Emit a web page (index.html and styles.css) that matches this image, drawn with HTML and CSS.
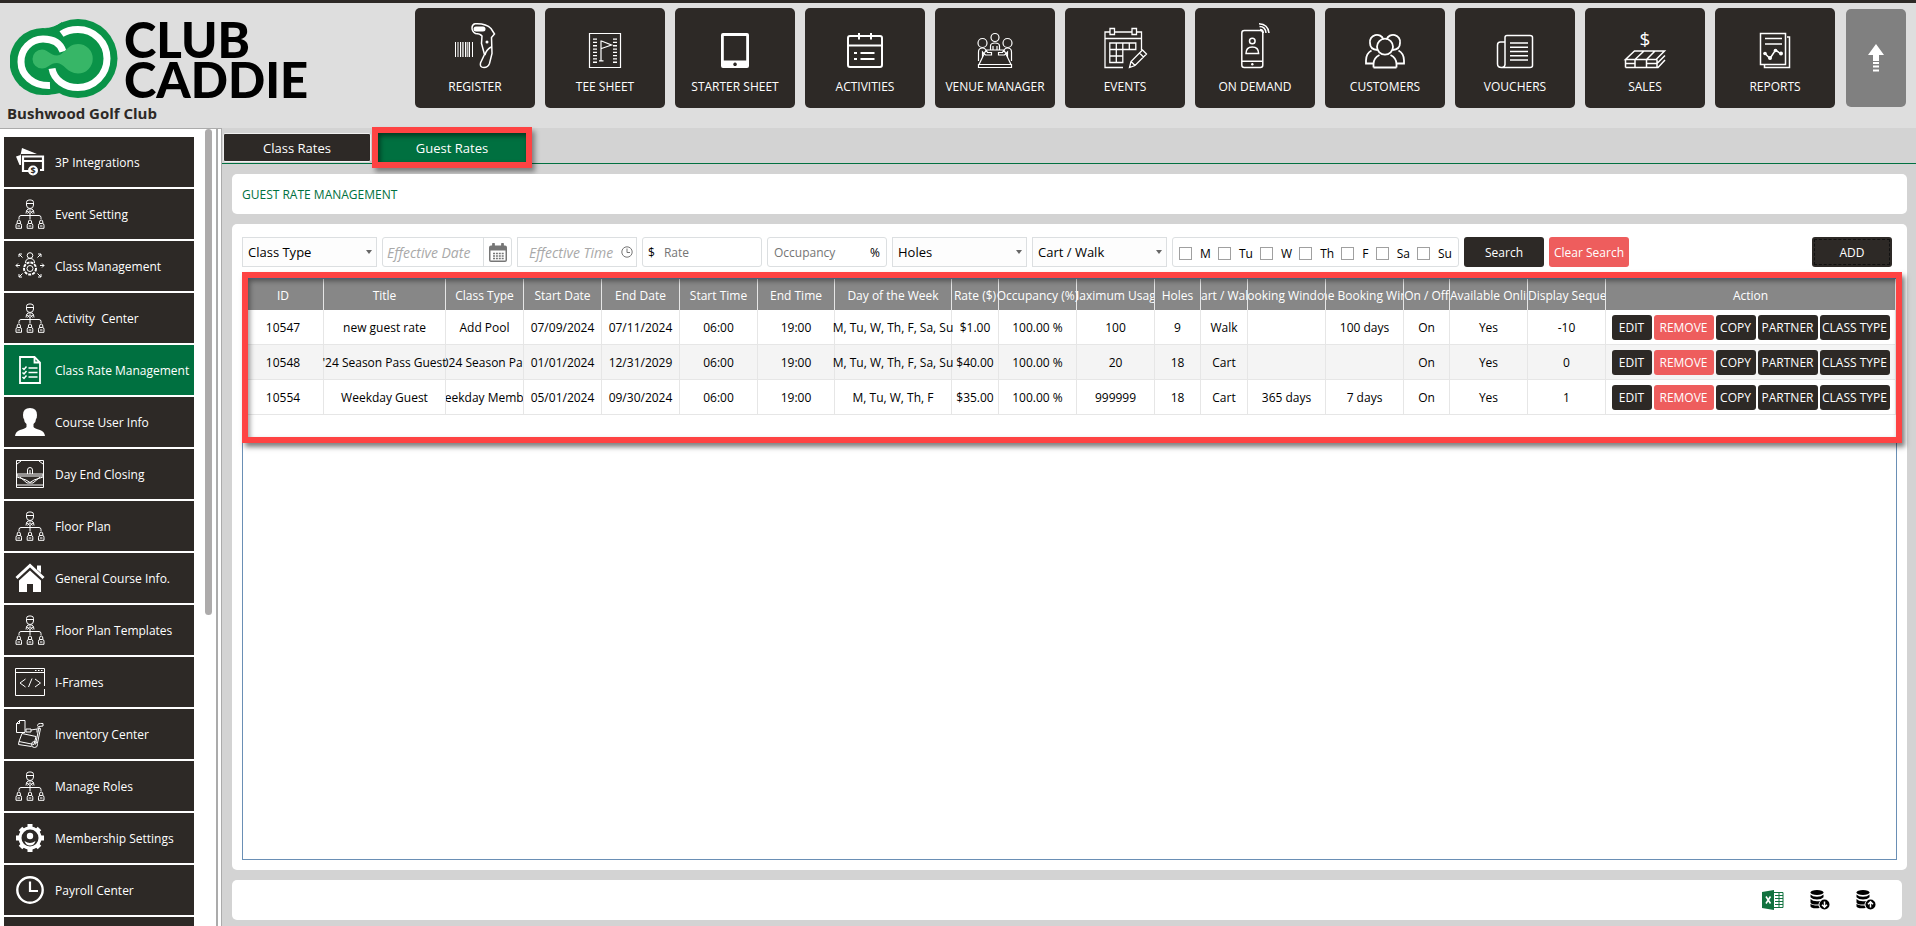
FILE: index.html
```html
<!DOCTYPE html>
<html lang="en">
  <head>
    <meta charset="UTF-8" />
    <title>Club Caddie - Guest Rates</title>
    <link rel="stylesheet" href="styles.css">
  </head>

  <body>
    <!-- shared icons -->
    <svg class="sprite" aria-hidden="true">
      <symbol id="i-org" viewBox="0 0 30 30">
        <path d="M11.500 6V3.500q0-2.500 2.500-2.500h2q2.500 0 2.500 2.500V6M11.500 4.500h7M11.500 6q0 3.500 3.500 3.500T18.500 6M11 14.500q0-3 2-4.500h4q2 1.500 2 4.500M11.500 11.500l3.500 3 3.500-3M12.500 14.500l2.500-3 2.500 3M15 14.500v5.500M4 20v-1.500q0-2 2-2h18q2 0 2 2V20" />
        <path d="M2.200 24.500v-1.500q0-2 1.600-2t1.600 2v1.500M13.400 24.500v-1.500q0-2 1.600-2t1.600 2v1.500M24.600 24.500v-1.500q0-2 1.600-2t1.600 2v1.500" />
        <path d="M1 29.300v-3q0-1.800 1.500-1.800H5q1.500 0 1.500 1.800v3zM12.200 29.300v-3q0-1.800 1.500-1.800h2.600q1.500 0 1.500 1.800v3zM23.500 29.300v-3q0-1.800 1.500-1.800h2.500q1.500 0 1.500 1.800v3zM2.500 27h2.500M13.700 27h2.600M25 27h2.500" />
      </symbol>
      <symbol id="i-db" viewBox="0 0 20 20">
        <ellipse cx="7" cy="2.500" rx="6.500" ry="2.500" />
        <path d="M.5 4.500q2 2.200 6.500 2.200t6.500-2.200v2.800q-2 2.200-6.500 2.200T.5 7.300zM.5 9q2 2.200 6.500 2.200 1.800 0 3-.3-1.500 1.500-1.500 3.500-7 .6-8-1.900zM.5 13.800q2 2 8 1.800.3 1.400 1.200 2.400Q1.500 19 .5 16.500z" />
        <circle cx="14.500" cy="14.500" r="5" />
      </symbol>
    </svg>

    <header class="header">
      <div class="brand">
        <a href="#" class="logo">
          <svg class="logo-mark" viewBox="10 19 108 80" aria-hidden="true">
            <circle cx="43" cy="61.500" r="33.500" fill="#0a9348" />
            <circle cx="78" cy="58.500" r="39.500" fill="#0a9348" />
            <path d="M44 28q10 0 18-6v12zM44 95q6 0 16-2l-4-10z" fill="#0a9348" />
            <path d="M63 51.500C60 42 52 39 43 39a22.500 22.500 0 0 0-22 23c0 13 12 24 29 23.500" fill="none" stroke="#fff" stroke-width="7" />
            <path d="M61.500 34c5-3.500 11-4.500 16.500-4.500a29 29 0 1 1 0 58c-13 0-24-7.500-26-19" fill="none" stroke="#fff" stroke-width="7" />
            <path d="M42 49.500c6 0 8 6 15 6S67 44 78 44a14.500 14.500 0 0 1 0 29.500c-11 0-14-10.500-21-10.500s-9 5.500-15 5.500a9.500 9.500 0 0 1 0-19z" fill="#37b667" />
          </svg>
          <span class="logo-text">CLUB<br>CADDIE</span>
        </a>
        <div class="club-name">Bushwood Golf Club</div>
      </div>
      <nav class="top-nav">
        <a href="#" class="nav-btn">
          <svg viewBox="0 0 40 46">
            <path d="M.5 19v15M3 19v15M5.500 19v15M10.500 19v15M14.500 19v15M17.500 19v15" stroke-width="1" />
            <path d="M7.800 19v15M12.500 19v15" stroke-width="2" opacity=".7" />
            <path d="M20 .8q11-.6 16 4.700l3.500 5.500-3 3.500.5 16-2.500 10q-1.500 4-5.500 4-4.500 0-3.500-4.500l4-8.500-3-11 .5-7.500q-2-2.500-6.500-2.500Q17 8.500 17 5T20 .8zM36 24q-5 3-6 8" />
            <rect class="fill" x="18.500" y="3.500" width="12" height="5" rx="2.500" />
            <circle class="fill" cx="32" cy="19" r="1.500" />
          </svg>
          REGISTER
        </a>
        <a href="#" class="nav-btn">
          <svg viewBox="0 0 40 46">
            <path d="M4.500 14v30.500h31v-34h-31zM16 17.500v20.500M14 37.800h4.500M16.500 18l10 4-10 3.500" stroke-width="1.200" />
            <path d="M10 15.500v25M30 15.500v25" stroke-width="4" stroke-dasharray="1.300 2" />
          </svg>
          TEE SHEET
        </a>
        <a href="#" class="nav-btn">
          <svg viewBox="0 0 40 46">
            <path class="fill" fill-rule="evenodd" d="M8 10h24q2 0 2 2v31q0 2-2 2H8q-2 0-2-2V12q0-2 2-2zm.8 3v24.500h22.400V13zM20 39.500a1.800 1.800 0 1 0 .1 0z" />
          </svg>
          STARTER SHEET
        </a>
        <a href="#" class="nav-btn">
          <svg viewBox="0 0 40 46" stroke-width="2">
            <rect x="3" y="13" width="34" height="31" rx="2" />
            <path d="M3 22.500h34M14 10v6.500M26 10v6.500M15.500 30h14M15.500 36h14M9 30h3M9 36h3" />
          </svg>
          ACTIVITIES
        </a>
        <a href="#" class="nav-btn">
          <svg viewBox="0 0 40 46" stroke-width="1.200">
            <circle cx="7.500" cy="20" r="4.500" />
            <circle cx="20" cy="14.500" r="4" />
            <circle cx="32.500" cy="20" r="4.500" />
            <path d="M15.500 27v-4q0-3 4.500-3t4.500 3v4M18 23v4M22 23v4M11 27h18l7 14.500H4zM3.500 41.500h33v3h-33zM3.500 38v-9q0-4 4-4 3 0 5 4.500h4v2.500h-6L7.500 29v5M36.500 38v-9q0-4-4-4-3 0-5 4.500h-4v2.500h6l3-3v5" />
          </svg>
          VENUE MANAGER
        </a>
        <a href="#" class="nav-btn">
          <svg viewBox="0 0 40 46" stroke-width="1.300">
            <path d="M5 9H0v35.500h18M9.500 9h17M32 9h4.500v18M0 15.500h36.500M5 5.500h4.500v6H5zM27 5.500h4.500v6H27z" />
            <path d="M4.800 20h26v6.500h-13v13h-13zM11.300 20v19.500M17.800 20v6.500M24.300 20v6.500M4.800 26.500h13M4.800 33h13M24.500 44.500l1.500-6L37.500 27l4 4L30 42.500zM34.500 30l4 4M26 38.500l4 4" />
          </svg>
          EVENTS
        </a>
        <a href="#" class="nav-btn">
          <svg viewBox="0 0 40 46">
            <rect x="6.800" y="7.500" width="21" height="37" rx="2.500" />
            <path d="M7 38.200h21M11 30.500q0-6.500 6.300-6.500t6.300 6.500zM25 6.500q3 0 3.300 3.500M24.500 3.500q6 0 6.500 6.500M24 .7q9 .3 10 9.300" />
            <circle cx="17.300" cy="18" r="2.800" />
            <circle class="fill" cx="17.300" cy="41.300" r="1.200" />
          </svg>
          ON DEMAND
        </a>
        <a href="#" class="nav-btn">
          <svg viewBox="0 0 40 46" stroke-width="1.800">
            <circle cx="20" cy="23.700" r="8" />
            <path d="M8.500 44.500v-3.500q0-6 6-9M31.500 44.500v-3.500q0-6-6-9M8.500 44.500h23M12.500 27q-7.500-.5-7.500-7a7 7 0 0 1 13.500-3.500M27.500 27q7.500-.5 7.500-7a7 7 0 0 0-13.500-3.500M8 40.500H1v-3q0-7 5.500-10M32 40.500h7v-3q0-7-5.500-10" />
          </svg>
          CUSTOMERS
        </a>
        <a href="#" class="nav-btn">
          <svg viewBox="0 0 40 46">
            <path d="M10 42V14.500q0-2 2-2h23q2.500 0 2.500 2v28q0 2-2.500 2H6.500q-4 0-4-3.500V22q0-3 3-3H10M10 41q0 3.500-3.500 3.500M15 20h18M15 24.300h18M15 28.500h18M15 32.700h18M15 37h18" />
          </svg>
          VOUCHERS
        </a>
        <a href="#" class="nav-btn">
          <svg viewBox="0 0 40 46">
            <text class="fill" x="20" y="23" font-size="19" text-anchor="middle">$</text>
            <path d="M9.500 28h30L31 36.500H.5zM.5 40.500H10M22 40.500h10l8-8M.5 44.500H33l7-7.500M.5 36.500v8M10 36.500v8M21.500 36.500v8M32 36.500v8M10 36.500l9-8.500M21.500 36.500l8.500-8.500" />
          </svg>
          SALES
        </a>
        <a href="#" class="nav-btn">
          <svg viewBox="0 0 40 46">
            <path d="M5.500 10.500h25v31h-25zM32 14h2.500v30.500H9.500V42M10 15.500h17M10 21h17M10 30.500l5 5 5.500-8.500 5.500 4" />
            <g class="fill"><circle cx="10" cy="30.500" r="1.800" /><circle cx="15" cy="35" r="2" /><circle cx="20.500" cy="27.500" r="1.800" /><circle cx="26" cy="30.500" r="2" /></g>
          </svg>
          REPORTS
        </a>
      </nav>
      <button type="button" class="collapse-btn" aria-label="Collapse menu">
        <svg width="16" height="28" viewBox="0 0 16 28" fill="#fff"><path d="M8 0l8 11h-5v6H5v-6H0zM5 18h6v2H5zM5 21.500h6v2H5zM5 25.500h6v2H5z" /></svg>
      </button>
    </header>

    <div class="page">
      <aside class="sidebar">
        <ul class="menu">
          <li><a href="#">
            <svg viewBox="0 0 30 30"><path class="fill" d="M7 1l15 6H6v11H4.500L1 9.500 5.500 8z" /><path d="M14 24H8V9.500h20V23h-3M7 14h20" stroke-width="2.200" /><circle class="fill" cx="18" cy="23.500" r="5" /><text x="18" y="27" font-size="9" font-weight="700" text-anchor="middle" fill="#2d2926" stroke="none">$</text></svg>
            3P Integrations</a></li>
          <li><a href="#"><svg><use href="#i-org" /></svg>Event Setting</a></li>
          <li><a href="#">
            <svg viewBox="0 0 30 30"><circle cx="15" cy="4.500" r="2.800" /><path d="M10.500 12q0-4.500 4.500-4.500t4.500 4.500M1 14.500h4M3 12.500l-2 2 2 2M29 14.500h-4M27 12.500l2 2-2 2M4 3l3.500 3.500M4 6V3h3M26 3l-3.500 3.500M26 6V3h-3M4 26l3.500-3.500M4 23v3h3M26 26l-3.500-3.500M26 23v3h-3" /><circle cx="15" cy="17.500" r="6" stroke-dasharray="3 1" stroke-width="2" /><circle cx="15" cy="17.500" r="3" /></svg>
            Class Management</a></li>
          <li><a href="#"><svg><use href="#i-org" /></svg>Activity&nbsp; Center</a></li>
          <li><a href="#" class="active">
            <svg viewBox="0 0 30 30"><path d="M5 2h14.500L25 7.500V28H5zM19.500 2v5.500H25" stroke-width="1.800" /><path d="M13.500 13h9M13.500 17.500h9M13.500 22h9M7.500 13l1.500 1.500 2.500-3M7.500 17.500L9 19l2.500-3M7.500 22L9 23.500l2.500-3" stroke-width="1.500" /></svg>
            Class Rate Management</a></li>
          <li><a href="#">
            <svg viewBox="0 0 30 30"><path class="fill" d="M15 1q7 0 7 7 0 3-1 4 0 3-2.500 5v3q1 1.500 6.500 3 4.500 1.500 5 6H0q.5-4.500 5-6 5.500-1.500 6.500-3v-3Q9 15 9 12q-1-1-1-4 0-7 7-7z" /></svg>
            Course User Info</a></li>
          <li><a href="#">
            <svg viewBox="0 0 30 30"><path d="M1.500 1.500h27v27h-27zM2 5l4-3M28 5l-4-3M12.500 15v-4q0-2.500 2.500-2.500t2.500 2.500v4M15 11v4M2 15h26v2H2zM2 18l9 3 4 2.500 4-2.500 9-3M5 18l7 6h6l7-6M2 26h26" /></svg>
            Day End Closing</a></li>
          <li><a href="#"><svg><use href="#i-org" /></svg>Floor Plan</a></li>
          <li><a href="#">
            <svg viewBox="0 0 30 30"><path d="M1.500 15L15 2.500 28.500 15" stroke-width="3" /><path class="fill" d="M22 2.500h4V10l-4-3.500zM15 7.500L26 17.500V29h-8v-8h-6v8H4V17.500z" /></svg>
            General Course Info.</a></li>
          <li><a href="#"><svg><use href="#i-org" /></svg>Floor Plan Templates</a></li>
          <li><a href="#">
            <svg viewBox="0 0 30 30"><path d="M29.500 19V1.500H.5v27h29V22M.5 5.500h29M20 3.500h1.500M23 3.500h1.500M26 3.500h1.500M10.500 12l-5.500 4 5.500 4M20 12l5.500 4-5.500 4M17 11.500L13.500 20" /></svg>
            I-Frames</a></li>
          <li><a href="#">
            <svg viewBox="0 0 30 30"><path d="M4.500 1.500H10v12H1.500v-9zM4.500 1.500v3h-3M11 10h5v3h-5zM16 11l6-1v3.500M7 14.500l14 3-2 8-15-3zM4 22.500l-.5 3 13 2M28 4.500q-5.500-.5-5.500 2l1.500 2-3.500 17M28 4.500v2.500l-4 .5M22 9l3.500.5L22.500 24" /><circle cx="19.500" cy="25.500" r="3" /></svg>
            Inventory Center</a></li>
          <li><a href="#"><svg><use href="#i-org" /></svg>Manage Roles</a></li>
          <li><a href="#">
            <svg viewBox="0 0 30 30"><circle cx="15" cy="15" r="10" stroke-width="3" /><path d="M15 1v4M15 25v4M1 15h4M25 15h4M5.500 5.500L8 8M24.500 5.500L22 8M5.500 24.500L8 22M24.500 24.500L22 22" stroke-width="5" /><circle class="fill" cx="15" cy="13" r="3.200" /><path class="fill" d="M9.500 18q5.500 4 11 0-1.500 4.500-5.500 4.500T9.500 18z" /></svg>
            Membership Settings</a></li>
          <li><a href="#">
            <svg viewBox="0 0 30 30"><circle cx="15" cy="15" r="12.700" stroke-width="2.400" /><path d="M15 6.500V16h8" stroke-width="2.200" /></svg>
            Payroll Center</a></li>
          <li class="menu-blank"></li>
        </ul>
        <div class="scroll-thumb"></div>
      </aside>

      <main class="content">
        <nav class="tabs">
          <a href="#" class="tab">Class Rates</a>
          <a href="#" class="tab active">Guest Rates</a>
        </nav>

        <h1 class="panel title-panel">GUEST RATE MANAGEMENT</h1>

        <section class="panel main-panel">
          <form class="filters">
            <div class="select">
              <select aria-label="Class Type"><option>Class Type</option></select>
            </div>
            <div class="field date">
              <input type="text" placeholder="Effective Date" aria-label="Effective Date">
              <button type="button" aria-label="Open calendar">
                <svg width="18" height="19" viewBox="0 0 18 19"><path fill="#767676" fill-rule="evenodd" d="M2 2.500h1.500V1h2v1.500h7V1h2v1.500H16q2 0 2 2V17q0 2-2 2H2q-2 0-2-2V4.500q0-2 2-2zM1.500 7.500v10h15v-10z" /><path d="M4.500 0v4.500M13.500 0v4.500" stroke="#767676" stroke-width="2.500" /><path d="M4 10.500h11M4 13h11M4 15.500h11" stroke="#767676" stroke-width="1.600" stroke-dasharray="2 .9" /></svg>
              </button>
            </div>
            <div class="field time">
              <input type="text" placeholder="Effective Time" aria-label="Effective Time">
              <svg width="12" height="12" viewBox="0 0 12 12" fill="none" stroke="#767676"><circle cx="6" cy="6" r="5.200" /><path d="M6 2.500V6.500h3" /></svg>
            </div>
            <label class="field rate">$ <input type="text" placeholder="Rate"></label>
            <label class="field occupancy"><input type="text" placeholder="Occupancy"> %</label>
            <div class="select">
              <select aria-label="Holes"><option>Holes</option></select>
            </div>
            <div class="select">
              <select aria-label="Cart / Walk"><option>Cart / Walk</option></select>
            </div>
            <div class="field days">
              <label><input type="checkbox">M</label>
              <label><input type="checkbox">Tu</label>
              <label><input type="checkbox">W</label>
              <label><input type="checkbox">Th</label>
              <label><input type="checkbox">F</label>
              <label><input type="checkbox">Sa</label>
              <label><input type="checkbox">Su</label>
            </div>
            <button type="button" class="btn">Search</button>
            <button type="reset" class="btn red">Clear Search</button>
            <button type="button" class="btn add">ADD</button>
          </form>

          <div class="grid">
            <table class="rates">
              <colgroup>
                <col class="c-id"><col class="c-title"><col class="c-md"><col class="c-md"><col class="c-md"><col class="c-md"><col class="c-end">
                <col class="c-week"><col class="c-sm"><col class="c-md"><col class="c-md"><col class="c-xs"><col class="c-sm">
                <col class="c-md"><col class="c-md"><col class="c-xs"><col class="c-md"><col class="c-md"><col>
              </colgroup>
              <thead>
                <tr>
                  <th><div>ID</div></th>
                  <th><div>Title</div></th>
                  <th><div>Class Type</div></th>
                  <th><div>Start Date</div></th>
                  <th><div>End Date</div></th>
                  <th><div>Start Time</div></th>
                  <th><div>End Time</div></th>
                  <th><div>Day of the Week</div></th>
                  <th><div>Rate ($)</div></th>
                  <th><div class="fit">Occupancy (%)</div></th>
                  <th><div>Maximum Usage</div></th>
                  <th><div>Holes</div></th>
                  <th><div>Cart / Walk</div></th>
                  <th><div>Booking Window</div></th>
                  <th><div>Online Booking Window</div></th>
                  <th><div class="fit">On / Off</div></th>
                  <th><div class="start">Available Online</div></th>
                  <th><div class="start">Display Sequence</div></th>
                  <th><div>Action</div></th>
                </tr>
              </thead>
              <tbody>
                <tr>
                  <td><div>10547</div></td>
                  <td><div>new guest rate</div></td>
                  <td><div>Add Pool</div></td>
                  <td><div>07/09/2024</div></td>
                  <td><div>07/11/2024</div></td>
                  <td><div>06:00</div></td>
                  <td><div>19:00</div></td>
                  <td><div class="fit">M, Tu, W, Th, F, Sa, Su</div></td>
                  <td><div>$1.00</div></td>
                  <td><div>100.00 %</div></td>
                  <td><div>100</div></td>
                  <td><div>9</div></td>
                  <td><div>Walk</div></td>
                  <td></td>
                  <td><div>100 days</div></td>
                  <td><div>On</div></td>
                  <td><div>Yes</div></td>
                  <td><div>-10</div></td>
                  <td><div class="actions"><button type="button">EDIT</button><button type="button" class="red wide">REMOVE</button><button type="button">COPY</button><button type="button" class="wide">PARTNER</button><button type="button" class="wider">CLASS TYPE</button></div></td>
                </tr>
                <tr>
                  <td><div>10548</div></td>
                  <td><div class="fit">'24 Season Pass Guest</div></td>
                  <td><div>2024 Season Pass</div></td>
                  <td><div>01/01/2024</div></td>
                  <td><div>12/31/2029</div></td>
                  <td><div>06:00</div></td>
                  <td><div>19:00</div></td>
                  <td><div class="fit">M, Tu, W, Th, F, Sa, Su</div></td>
                  <td><div>$40.00</div></td>
                  <td><div>100.00 %</div></td>
                  <td><div>20</div></td>
                  <td><div>18</div></td>
                  <td><div>Cart</div></td>
                  <td></td>
                  <td></td>
                  <td><div>On</div></td>
                  <td><div>Yes</div></td>
                  <td><div>0</div></td>
                  <td><div class="actions"><button type="button">EDIT</button><button type="button" class="red wide">REMOVE</button><button type="button">COPY</button><button type="button" class="wide">PARTNER</button><button type="button" class="wider">CLASS TYPE</button></div></td>
                </tr>
                <tr>
                  <td><div>10554</div></td>
                  <td><div>Weekday Guest</div></td>
                  <td><div>Weekday Member</div></td>
                  <td><div>05/01/2024</div></td>
                  <td><div>09/30/2024</div></td>
                  <td><div>06:00</div></td>
                  <td><div>19:00</div></td>
                  <td><div>M, Tu, W, Th, F</div></td>
                  <td><div>$35.00</div></td>
                  <td><div>100.00 %</div></td>
                  <td><div>999999</div></td>
                  <td><div>18</div></td>
                  <td><div>Cart</div></td>
                  <td><div>365 days</div></td>
                  <td><div>7 days</div></td>
                  <td><div>On</div></td>
                  <td><div>Yes</div></td>
                  <td><div>1</div></td>
                  <td><div class="actions"><button type="button">EDIT</button><button type="button" class="red wide">REMOVE</button><button type="button">COPY</button><button type="button" class="wide">PARTNER</button><button type="button" class="wider">CLASS TYPE</button></div></td>
                </tr>
              </tbody>
            </table>
            <div class="highlight"></div>
          </div>
        </section>

        <footer class="panel footer-panel">
          <button type="button" aria-label="Export to Excel">
            <svg width="22" height="20" viewBox="0 0 22 20"><path fill="#fff" stroke="#11723f" d="M11 2.500h10v15H11z" /><path d="M13 5.500h8M13 8.500h8M13 11.500h8M13 14.500h8M17 3v14" stroke="#11723f" /><path fill="#11723f" d="M0 2l12-2v20L0 18z" /><path d="M4 6.500l4.500 7M8.500 6.500L4 13.500" stroke="#fff" stroke-width="1.600" /></svg>
          </button>
          <button type="button" aria-label="Download data">
            <svg width="20" height="20" viewBox="0 0 20 20"><use href="#i-db" /><path d="M14.500 11.500v5.500M12 14.800l2.500 2.500 2.500-2.500" stroke="#fff" stroke-width="1.500" fill="none" /></svg>
          </button>
          <button type="button" aria-label="Upload data">
            <svg width="20" height="20" viewBox="0 0 20 20"><use href="#i-db" /><path d="M14.500 17.500V12M12 14.200l2.500-2.500 2.500 2.500" stroke="#fff" stroke-width="1.500" fill="none" /></svg>
          </button>
        </footer>
      </main>
    </div>
  </body>
</html>
```
FILE: styles.css
```css
* {
  box-sizing: border-box;
}

body {
  margin: 0;
  height: 100vh;
  display: flex;
  flex-direction: column;
  overflow: hidden;
  border-top: 3px solid #2d2926;
  background: #fff;
  color: #000;
  font-family: "Open Sans", "Noto Sans", sans-serif;
  font-size: 13px;
}

a {
  color: inherit;
  text-decoration: none;
}

button,
input,
select {
  font: inherit;
  color: inherit;
  margin: 0;
}

button {
  padding: 0;
  border: none;
  background: none;
  cursor: pointer;
}

.sprite {
  display: none;
}

/* header */
.header {
  display: flex;
  flex: none;
  height: 125px;
  padding-right: 10px;
  background: #dedede;
}

.brand {
  flex: 1;
}

.logo {
  display: flex;
  gap: 6px;
  height: 96px;
  padding: 16px 0 0 10px;
}

.logo-mark {
  width: 108px;
  height: 80px;
}

.logo-text {
  font-family: Lato, sans-serif;
  font-size: 49px;
  font-weight: 900;
  line-height: 40px;
}

.club-name {
  padding-left: 7px;
  color: #2d2926;
  font-size: 15px;
  font-weight: 700;
  line-height: 28px;
}

.top-nav {
  display: flex;
  gap: 10px;
  padding-top: 5px;
}

.nav-btn {
  display: flex;
  flex-direction: column;
  align-items: center;
  width: 120px;
  height: 100px;
  padding-top: 15px;
  border-radius: 5px;
  background: #2d2926;
  color: #fff;
  font-size: 12px;
  line-height: 35px;
  white-space: nowrap;
}

.nav-btn svg {
  flex: none;
  width: 40px;
  height: 46px;
  overflow: visible;
}

.nav-btn svg,
.menu svg {
  fill: none;
  stroke: #fff;
}

.nav-btn svg:not([stroke-width]) {
  stroke-width: 1.5px;
}

.nav-btn .fill,
.menu .fill {
  fill: #fff;
  stroke: none;
}

.collapse-btn {
  width: 60px;
  height: 98px;
  margin: 6px 0 0 11px;
  border-radius: 5px;
  background: #808080;
}

.collapse-btn svg {
  display: block;
  margin: 0 auto;
}

.page {
  display: flex;
  flex: 1;
  min-height: 0;
}

/* left menu */
.sidebar {
  display: flex;
  flex: none;
  gap: 11px;
  width: 222px;
  padding-left: 4px;
  overflow: hidden;
  border-top: 1px solid #ababab;
  border-right: 1px solid #ababab;
  background: linear-gradient(#ababab, #ababab) 216px 0 / 2px 100% no-repeat;
}

.menu {
  width: 190px;
  margin: 0;
  padding: 8px 0 0;
  list-style: none;
}

.menu li {
  height: 50px;
  margin-bottom: 2px;
  background: #2d2926;
}

.menu a {
  display: flex;
  align-items: center;
  gap: 10px;
  height: 50px;
  padding-left: 11px;
  color: #fff;
  font-size: 12px;
  white-space: nowrap;
}

.menu a.active {
  background: #007040;
}

.menu svg {
  flex: none;
  width: 30px;
  height: 30px;
}

.scroll-thumb {
  width: 7px;
  height: 61%;
  border-radius: 4px;
  background: #adabab;
}

/* content */
.content {
  display: flex;
  flex: 1;
  flex-direction: column;
  gap: 10px;
  min-width: 0;
  padding: 0 9px 6px 0;
  background: #d3d3d3;
}

.tabs {
  display: flex;
  gap: 7px;
  height: 36px;
  margin-right: -9px;
  padding: 5px 0 0 1px;
  border-bottom: 1px solid #007040;
}

.tab {
  width: 148px;
  height: 29px;
  border: 1px solid #f0f0f0;
  border-radius: 2px;
  background: #2d2926;
  color: #fff;
  line-height: 29px;
  text-align: center;
}

.tab.active {
  border: none;
  border-radius: 0;
  background: #007040;
  line-height: 31px;
  outline: 6px solid #fe4343;
  box-shadow: inset 2px 3px 5px rgba(0, 0, 0, 0.5), 3px 4px 5px 6px rgba(0, 0, 0, 0.4);
}

.panel {
  margin: 0 0 0 10px;
  border-radius: 5px;
  background: #fff;
}

.title-panel {
  height: 40px;
  padding-left: 10px;
  color: #007040;
  font-size: 12px;
  font-weight: 400;
  line-height: 42px;
}

.main-panel {
  display: flex;
  flex: 1;
  flex-direction: column;
  gap: 11px;
  padding: 13px 10px 10px;
}

.filters {
  display: flex;
  gap: 5px;
  height: 30px;
  padding-right: 5px;
  white-space: nowrap;
}

.select {
  position: relative;
  width: 135px;
}

.select::after {
  content: "";
  position: absolute;
  top: 13px;
  right: 5px;
  border: 3px solid transparent;
  border-top: 4px solid #666;
  border-bottom: none;
  pointer-events: none;
}

.select select {
  width: 100%;
  height: 100%;
  padding: 0 5px;
  appearance: none;
  border: 1px solid #dcdfe1;
  border-radius: 0;
  background: #fdfdfd;
}

.field {
  display: flex;
  align-items: center;
  border: 1px solid #dcdfe1;
  border-radius: 3px;
  font-size: 12px;
}

.field input[type="text"] {
  flex: 1;
  min-width: 0;
  padding: 0;
  border: none;
  outline: none;
  background: none;
}

.field ::placeholder {
  color: #757575;
}

.date,
.time {
  font-size: 14px;
  font-style: italic;
}

.date ::placeholder,
.time ::placeholder {
  color: #a9a9a9;
}

.date {
  width: 130px;
  padding-left: 4px;
}

.date button {
  display: flex;
  align-items: center;
  justify-content: center;
  width: 28px;
  height: 100%;
  border-left: 1px solid #dcdfe1;
}

.time {
  width: 120px;
  padding: 0 3px 0 11px;
  border-radius: 0;
}

.rate {
  gap: 9px;
  width: 120px;
  padding-left: 5px;
}

.occupancy {
  width: 120px;
  padding: 0 6px;
}

.days {
  justify-content: space-between;
  width: 287px;
  padding: 3px 6px 0 6px;
}

.days label {
  display: flex;
  align-items: center;
  gap: 8px;
  line-height: 20px;
}

.days input {
  width: 13px;
  height: 13px;
  appearance: none;
  border: 1px solid #a0a0a0;
  background: #fff;
}

.btn {
  width: 80px;
  border-radius: 3px;
  background: #2d2926;
  color: #fff;
  font-size: 12px;
}

.btn.red,
.actions .red {
  background: #ee5d5d;
}

.btn.add {
  margin-left: auto;
  outline: 1px dashed #111;
  outline-offset: -3px;
}

/* rates table */
.grid {
  position: relative;
  flex: 1;
  border: 1px solid #6a8fb5;
}

.rates {
  width: 100%;
  table-layout: fixed;
  border-collapse: separate;
  border-spacing: 0;
  font-size: 12px;
}

.c-id {
  width: 81px;
}

.c-title {
  width: 122px;
}

.c-md {
  width: 78px;
}

.c-end {
  width: 77px;
}

.c-sm {
  width: 47px;
}

.c-xs {
  width: 46px;
}

.c-week {
  width: 117px;
}

.rates th,
.rates td {
  height: 35px;
  padding: 0;
  border-right: 1px solid #e6e6e6;
  border-bottom: 1px solid #e6e6e6;
  font-weight: 400;
}

.rates th {
  height: 31px;
  padding-top: 2px;
  border-bottom: none;
  background: #878787;
  color: #fff;
}

.rates th div,
.rates td div {
  display: flex;
  justify-content: center;
  overflow: hidden;
  white-space: nowrap;
}

.rates th .start {
  justify-content: flex-start;
}

.rates th .fit,
.rates td .fit {
  overflow: visible;
}

.rates tbody tr:nth-child(even) {
  background: #f4f4f4;
}

.rates .actions {
  gap: 2px;
}

.actions button {
  width: 40px;
  height: 25px;
  border-radius: 3px;
  background: #2d2926;
  color: #fff;
  font-size: 12px;
}

.actions .wide {
  width: 60px;
}

.actions .wider {
  width: 70px;
}

/* red marker round the rows */
.highlight {
  position: absolute;
  top: -7px;
  right: -6px;
  left: -1px;
  height: 171px;
  border: 6px solid #fe4343;
  box-shadow: inset 2px 3px 5px rgba(0, 0, 0, 0.4), 3px 4px 5px rgba(0, 0, 0, 0.5);
  pointer-events: none;
}

.footer-panel {
  display: flex;
  align-items: center;
  justify-content: flex-end;
  gap: 26px;
  height: 40px;
  margin-right: 5px;
  padding-right: 26px;
}

.footer-panel svg {
  display: block;
}
```
